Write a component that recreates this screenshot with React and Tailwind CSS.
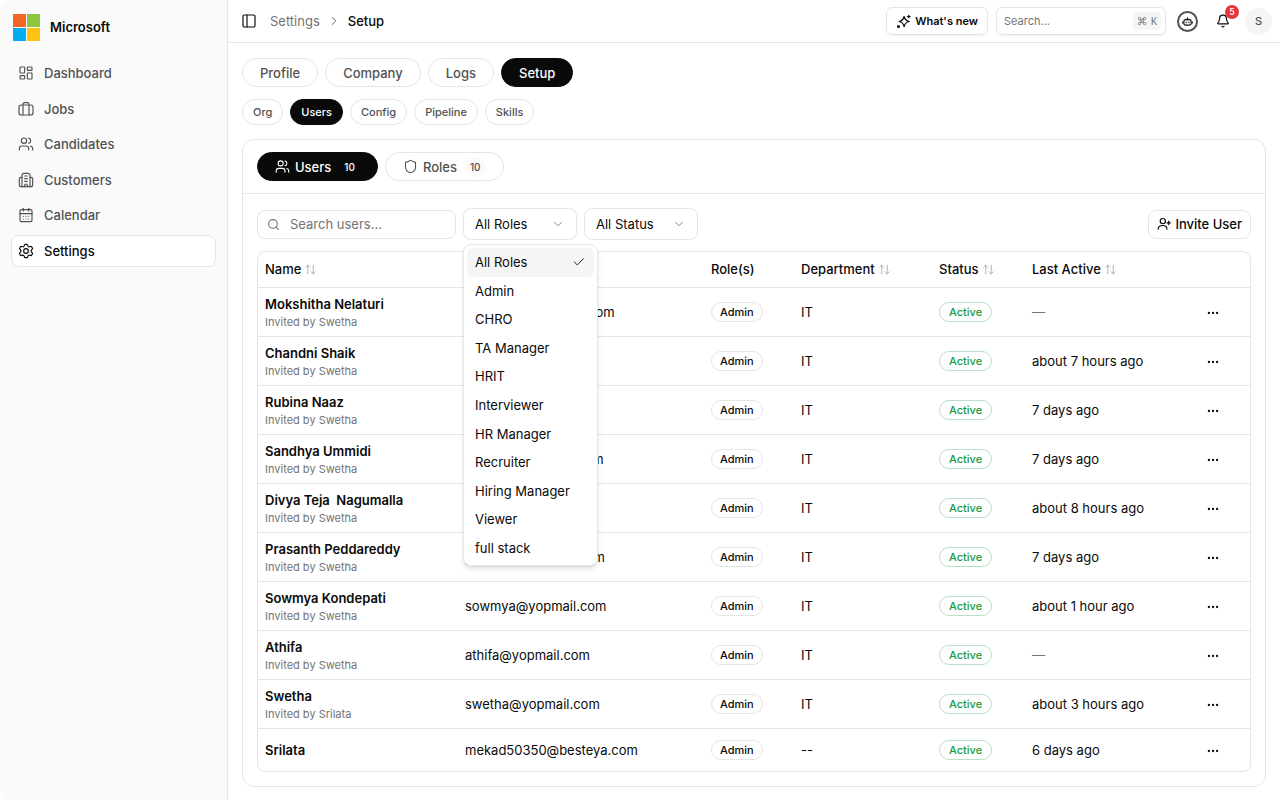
import { useState } from 'react'
import {
  Bell,
  CalendarDays,
  Check,
  ChevronDown,
  ChevronRight,
  Command,
  Ellipsis,
  LayoutDashboard,
  PanelLeft,
  Search,
  Shield,
  Users,
} from 'lucide-react'

function Icon({ size = 16, strokeWidth = 1.5, className = '', children }) {
  return (
    <svg
      width={size}
      height={size}
      viewBox="0 0 24 24"
      fill="none"
      stroke="currentColor"
      strokeWidth={strokeWidth}
      strokeLinecap="round"
      strokeLinejoin="round"
      className={`shrink-0 ${className}`}
      aria-hidden="true"
    >
      {children}
    </svg>
  )
}

function JobsIcon(props) {
  return (
    <Icon {...props}>
      <rect x="1.5" y="6" width="21" height="15" rx="3.5" />
      <path d="M7.5 6v15M16.5 6v15M7.5 6V5A2.5 2.5 0 0 1 10 2.5h4A2.5 2.5 0 0 1 16.5 5v1" />
    </Icon>
  )
}

function CustomersIcon(props) {
  return (
    <Icon {...props}>
      <path d="M6 22V5a3 3 0 0 1 3-3h6a3 3 0 0 1 3 3v17" />
      <path d="M6 8H4.500A2.500 2.500 0 0 0 2 10.500V19a3 3 0 0 0 3 3h14a3 3 0 0 0 3-3v-8.500A2.500 2.500 0 0 0 19.500 8H18" />
      <path d="M10 6h4M10 10h4M10 14h4M10 22v-2a2 2 0 0 1 4 0v2" />
    </Icon>
  )
}

function SettingsIcon(props) {
  return (
    <Icon {...props}>
      <path d="M21.3 7.100l-.5-.85c-.37-.65-.56-.97-.87-1.100-.32-.13-.68-.03-1.400.18l-1.200.34c-.46.1-.94.04-1.350-.17l-.34-.2a2.100 2.100 0 0 1-.8-.98l-.33-1c-.22-.66-.33-1-.6-1.180C13.650 2 13.300 2 12.600 2h-1.120c-.7 0-1.050 0-1.310.19-.26.18-.37.52-.6 1.180l-.33.97a2.100 2.100 0 0 1-.8.98l-.34.2c-.41.2-.89.26-1.350.16l-1.200-.34c-.7-.2-1.070-.3-1.400-.17-.3.13-.5.450-.86 1.100l-.5.850c-.35.6-.52.91-.49 1.230.04.320.27.580.740 1.100l1.030 1.150c.250.320.430.880.430 1.380s-.18 1.060-.430 1.380l-1.030 1.150c-.47.520-.7.780-.740 1.100-.03.320.140.620.490 1.230l.5.850c.370.650.560.970.870 1.100.320.130.680.030 1.400-.18l1.200-.34c.460-.1.940-.04 1.350.17l.34.2c.360.230.640.580.800.980l.330.980c.220.660.330 1 .600 1.180.260.180.610.180 1.310.180h1.120c.700 0 1.050 0 1.310-.19.260-.18.370-.52.600-1.180l.330-.97c.160-.4.440-.75.800-.98l.340-.2c.410-.2.890-.26 1.350-.16l1.200.34c.700.200 1.070.300 1.400.170.300-.13.500-.45.860-1.100l.500-.85c.350-.6.520-.91.490-1.230-.04-.32-.27-.58-.74-1.100l-1.030-1.150c-.25-.32-.43-.88-.43-1.380s.180-1.060.430-1.380l1.030-1.150c.470-.52.700-.78.740-1.100.030-.32-.14-.62-.49-1.230Z" />
      <circle cx="12" cy="12" r="3.5" />
    </Icon>
  )
}

function SparkIcon(props) {
  return (
    <Icon {...props}>
      <path d="M13 4c1.200 5.200 2.800 6.800 8 8-5.200 1.200-6.800 2.800-8 8-1.200-5.200-2.800-6.800-8-8 5.200-1.200 6.800-2.800 8-8Z" />
      <path d="M20.500 2v4M18.500 4h4" />
      <circle cx="4" cy="20" r="1.5" />
    </Icon>
  )
}

function PersonAddIcon(props) {
  return (
    <Icon {...props}>
      <circle cx="10" cy="7" r="4.5" />
      <path d="M2 21c0-4 3.500-6.500 8-6.500s7 2.500 7 6.500M20 7v6M17 10h6" />
    </Icon>
  )
}

function BotIcon(props) {
  return (
    <Icon {...props}>
      <rect x="4" y="8" width="16" height="12" rx="4" />
      <path d="M12 8V4M1.500 13v2M22.500 13v2M9 13.500v1M15 13.500v1" />
    </Icon>
  )
}

function SortIcon() {
  return (
    <Icon size={13} className="text-neutral-400">
      <path d="M7 20V4M3 8l4-4 4 4M17 4v16M13 16l4 4 4-4" />
    </Icon>
  )
}

const navItems = [
  { label: 'Dashboard', icon: LayoutDashboard },
  { label: 'Jobs', icon: JobsIcon },
  { label: 'Candidates', icon: Users },
  { label: 'Customers', icon: CustomersIcon },
  { label: 'Calendar', icon: CalendarDays },
  { label: 'Settings', icon: SettingsIcon, active: true },
]

const mainTabs = ['Profile', 'Company', 'Logs', 'Setup']
const subTabs = ['Org', 'Users', 'Config', 'Pipeline', 'Skills']

const roles = [
  'All Roles',
  'Admin',
  'CHRO',
  'TA Manager',
  'HRIT',
  'Interviewer',
  'HR Manager',
  'Recruiter',
  'Hiring Manager',
  'Viewer',
  'full stack',
]

const columns = [
  { label: 'Name', sort: true },
  { label: 'Email' },
  { label: 'Role(s)' },
  { label: 'Department', sort: true },
  { label: 'Status', sort: true },
  { label: 'Last Active', sort: true },
]

const users = [
  { name: 'Mokshitha Nelaturi', by: 'Swetha', email: 'mokshiha@yopmail.com', dept: 'IT', last: '' },
  { name: 'Chandni Shaik', by: 'Swetha', email: 'chandni@mail.com', dept: 'IT', last: 'about 7 hours ago' },
  { name: 'Rubina Naaz', by: 'Swetha', email: 'rubina@mail.com', dept: 'IT', last: '7 days ago' },
  { name: 'Sandhya Ummidi', by: 'Swetha', email: 'sandhia@yopmail.com', dept: 'IT', last: '7 days ago' },
  { name: 'Divya Teja  Nagumalla', by: 'Swetha', email: 'divya@mail.com', dept: 'IT', last: 'about 8 hours ago' },
  { name: 'Prasanth Peddareddy', by: 'Swetha', email: 'pasanth@yopmail.com', dept: 'IT', last: '7 days ago' },
  { name: 'Sowmya Kondepati', by: 'Swetha', email: 'sowmya@yopmail.com', dept: 'IT', last: 'about 1 hour ago' },
  { name: 'Athifa', by: 'Swetha', email: 'athifa@yopmail.com', dept: 'IT', last: '' },
  { name: 'Swetha', by: 'Srilata', email: 'swetha@yopmail.com', dept: 'IT', last: 'about 3 hours ago' },
  { name: 'Srilata', email: 'mekad50350@besteya.com', dept: '--', last: '6 days ago' },
]

function Sidebar() {
  return (
    <aside className="w-[228px] shrink-0 rounded-l-lg border-r border-neutral-200 bg-neutral-50 px-[11px]">
      <div className="flex h-[54px] items-center gap-2.5 pl-[2px]">
        <svg width="27" height="27" viewBox="0 0 27 27" aria-hidden="true">
          <path fill="#f26522" d="M0 0h13v13H0z" />
          <path fill="#8dc63f" d="M14 0h13v13H14z" />
          <path fill="#00aeef" d="M0 14h13v13H0z" />
          <path fill="#ffc20e" d="M14 14h13v13H14z" />
        </svg>
        <span className="text-[13px] font-semibold">Microsoft</span>
      </div>
      <nav className="mt-[3px] flex h-[210px] flex-col justify-between">
        {navItems.map(({ label, icon: NavIcon, active }) => (
          <a
            key={label}
            href="#"
            className={`flex h-8 items-center gap-2.5 rounded-lg border px-[6px] text-[13px] font-medium ${
              active ? 'border-neutral-200 bg-white text-neutral-950' : 'border-transparent text-neutral-600'
            }`}
          >
            <NavIcon size={16} strokeWidth={1.75} />
            {label}
          </a>
        ))}
      </nav>
    </aside>
  )
}

function Header() {
  return (
    <header className="flex h-[43px] items-center justify-between border-b border-neutral-200 pr-2 pl-[13px]">
      <div className="flex items-center">
        <button aria-label="Toggle sidebar" className="mr-[13px]">
          <PanelLeft size={16} strokeWidth={1.75} />
        </button>
        <nav className="flex items-center gap-[7px] text-[13px]" aria-label="Breadcrumb">
          <a href="#" className="text-neutral-500">Settings</a>
          <ChevronRight size={14} strokeWidth={1.5} className="text-neutral-600" />
          <span className="font-medium">Setup</span>
        </nav>
      </div>

      <div className="flex items-center">
        <button className="flex h-7 items-center gap-1 rounded-md border border-neutral-200 px-[9px] text-[11px] font-semibold shadow-xs">
          <SparkIcon size={15} strokeWidth={2} />
          What's new
        </button>
        <label className="ml-2 flex h-7 w-[170px] items-center rounded-md border border-neutral-200 pr-1 pl-[7px] text-[11px] shadow-xs">
          <input
            type="search"
            aria-label="Search"
            placeholder="Search..."
            className="w-full min-w-0 outline-none placeholder:text-neutral-500"
          />
          <kbd className="flex h-[18px] items-center gap-1 rounded bg-neutral-100 px-1 font-sans text-[10px] text-neutral-500">
            <Command size={10} />K
          </kbd>
        </label>
        <button
          aria-label="Assistant"
          className="ml-[11px] flex size-[21px] items-center justify-center rounded-full border-2 border-neutral-600"
        >
          <BotIcon size={11} strokeWidth={2.5} />
        </button>
        <button aria-label="Notifications" className="relative ml-[18px]">
          <Bell size={14} strokeWidth={2} />
          <span className="absolute -top-[9px] -right-[9px] flex size-[14px] items-center justify-center rounded-full bg-[#e5343a] text-[9px] font-medium text-white">
            5
          </span>
        </button>
        <button className="ml-[15px] flex size-[27px] items-center justify-center rounded-full bg-neutral-100 text-[11px] font-medium text-neutral-600">
          S
        </button>
      </div>
    </header>
  )
}

function RoleFilter() {
  const [role, setRole] = useState('All Roles')
  const [open, setOpen] = useState(true)

  function pick(value) {
    setRole(value)
    setOpen(false)
  }

  return (
    <div className="relative">
      <select
        aria-label="Role"
        value={role}
        onChange={(e) => setRole(e.target.value)}
        onMouseDown={(e) => {
          e.preventDefault()
          setOpen(!open)
        }}
        className="h-8 w-[114px] appearance-none rounded-lg border border-neutral-200 bg-white pl-[11px]"
      >
        {roles.map((r) => (
          <option key={r}>{r}</option>
        ))}
      </select>
      <ChevronDown
        size={14}
        strokeWidth={1.5}
        className="pointer-events-none absolute top-[9px] right-3 text-neutral-500"
      />
      {open && (
        <ul
          role="listbox"
          className="absolute top-9 left-0 z-10 grid h-[322px] w-[135px] auto-rows-fr rounded-lg border border-neutral-200 bg-white p-[3px] shadow-md"
        >
          {roles.map((r) => (
            <li
              key={r}
              role="option"
              aria-selected={r === role}
              onClick={() => pick(r)}
              className={`flex items-center justify-between rounded-md px-2 ${
                r === role ? 'bg-neutral-100' : ''
              }`}
            >
              {r}
              {r === role && <Check size={14} strokeWidth={1.5} />}
            </li>
          ))}
        </ul>
      )}
    </div>
  )
}

function UsersTable() {
  return (
    <div className="mt-[11px] overflow-hidden rounded-lg border border-neutral-200">
      <table className="w-full table-fixed text-left">
        <colgroup>
          <col className="w-[200px]" />
          <col className="w-[246px]" />
          <col className="w-[90px]" />
          <col className="w-[138px]" />
          <col className="w-[93px]" />
          <col className="w-[150px]" />
          <col className="w-[75px]" />
        </colgroup>
        <thead>
          <tr className="h-[35px] border-b border-neutral-200">
            {columns.map((c) => (
              <th key={c.label} className="px-[7px] font-medium">
                <span className="flex items-center gap-[3px]">
                  {c.label}
                  {c.sort && <SortIcon />}
                </span>
              </th>
            ))}
            <th aria-label="Actions" />
          </tr>
        </thead>
        <tbody>
          {users.map((u) => (
            <tr key={u.email} className="h-[49px] border-b border-neutral-200 last:h-[43px] last:border-b-0">
              <td className="px-[7px]">
                <p className="font-semibold whitespace-pre">{u.name}</p>
                {u.by && <p className="text-[11px] leading-4 text-neutral-500">Invited by {u.by}</p>}
              </td>
              <td className="px-[7px]">{u.email}</td>
              <td className="px-[7px]">
                <span className="inline-flex h-5 items-center rounded-full border border-neutral-200 px-2 text-[11px] font-medium">
                  Admin
                </span>
              </td>
              <td className="px-[7px]">{u.dept}</td>
              <td className="px-[7px]">
                <span className="inline-flex h-5 items-center rounded-full border border-[#b9dfc6] px-[9px] text-[11px] font-medium text-[#159a43]">
                  Active
                </span>
              </td>
              <td className="px-[7px]">{u.last || <span className="text-neutral-500">—</span>}</td>
              <td className="text-center">
                <button aria-label={`Actions for ${u.name}`} className="align-middle">
                  <Ellipsis size={14} strokeWidth={2} />
                </button>
              </td>
            </tr>
          ))}
        </tbody>
      </table>
    </div>
  )
}

export default function App() {
  return (
    <div className="flex min-h-screen bg-white font-['Inter',sans-serif] text-[13px] leading-5 text-neutral-950">
      <Sidebar />
      <div className="min-w-0 flex-1">
        <Header />
        <main className="px-[14px] pt-[15px] pb-[14px]">
          <div className="flex gap-[7px]">
            {mainTabs.map((tab) => (
              <button
                key={tab}
                className={`h-[29px] rounded-full border px-[17px] font-medium ${
                  tab === 'Setup' ? 'border-neutral-950 bg-neutral-950 text-white' : 'border-neutral-200 text-neutral-600'
                }`}
              >
                {tab}
              </button>
            ))}
          </div>
          <div className="mt-3 flex gap-[7px]">
            {subTabs.map((tab) => (
              <button
                key={tab}
                className={`h-[26px] rounded-full border px-2.5 text-[11px] font-medium ${
                  tab === 'Users' ? 'border-neutral-950 bg-neutral-950 text-white' : 'border-neutral-200 text-neutral-600'
                }`}
              >
                {tab}
              </button>
            ))}
          </div>

          <section className="mt-[14px] rounded-xl border border-neutral-200">
            <div className="flex gap-[7px] border-b border-neutral-200 px-[14px] py-3">
              <button className="flex h-[29px] items-center rounded-full border border-neutral-950 bg-neutral-950 px-[17px] font-medium text-white">
                <Users size={15} strokeWidth={1.75} />
                <span className="ml-[5px]">Users</span>
                <span className="ml-2 px-[5px] text-[10px]">10</span>
              </button>
              <button className="flex h-[29px] items-center rounded-full border border-neutral-200 px-[17px] font-medium text-neutral-600">
                <Shield size={15} strokeWidth={1.75} />
                <span className="ml-[5px]">Roles</span>
                <span className="ml-2 rounded-full bg-neutral-50 px-[5px] text-[10px]">10</span>
              </button>
            </div>

            <div className="p-[14px]">
              <div className="flex items-center gap-[7px]">
                <label className="flex h-[29px] w-[199px] items-center gap-2.5 rounded-lg border border-neutral-200 px-[9px] text-neutral-500">
                  <Search size={13} className="shrink-0" />
                  <input
                    type="text"
                    aria-label="Search users"
                    placeholder="Search users..."
                    className="w-full min-w-0 outline-none placeholder:text-neutral-500"
                  />
                </label>
                <RoleFilter />
                <div className="relative">
                  <select
                    aria-label="Status"
                    className="h-8 w-[114px] appearance-none rounded-lg border border-neutral-200 bg-white pl-[11px]"
                  >
                    <option>All Status</option>
                    <option>Active</option>
                    <option>Inactive</option>
                  </select>
                  <ChevronDown
                    size={14}
                    strokeWidth={1.5}
                    className="pointer-events-none absolute top-[9px] right-3 text-neutral-500"
                  />
                </div>
                <button className="ml-auto flex h-[29px] items-center gap-1 rounded-lg border border-neutral-200 px-2 font-medium">
                  <PersonAddIcon size={14} strokeWidth={2} />
                  Invite User
                </button>
              </div>
              <UsersTable />
            </div>
          </section>
        </main>
      </div>
    </div>
  )
}
